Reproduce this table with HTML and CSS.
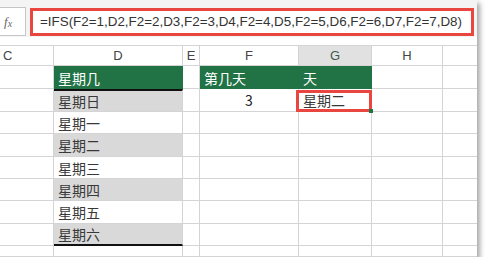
FILE: index.html
```html
<!DOCTYPE html>
<html lang="zh-CN">
<head>
    <meta charset="UTF-8">
    <meta name="viewport" content="width=device-width, initial-scale=1.0">
    <title>IFS 星期</title>
    <link rel="stylesheet" href="styles.css">
</head>
<body>

    <div class="window">
        <div class="formula-bar">
            <div class="fx-box"><span class="fx">f<span class="fx-x">x</span></span></div>
            <div class="formula">=IFS(F2=1,D2,F2=2,D3,F2=3,D4,F2=4,D5,F2=5,D6,F2=6,D7,F2=7,D8)</div>
        </div>

        <div class="sheet">
            <!-- column headers -->
            <div class="hd hd-c">C</div>
            <div class="hd">D</div>
            <div class="hd">E</div>
            <div class="hd">F</div>
            <div class="hd selected">G</div>
            <div class="hd">H</div>
            <div class="hd"></div>

            <!-- row 1 -->
            <div class="cell"></div>
            <div class="cell green">星期几</div>
            <div class="cell"></div>
            <div class="cell green">第几天</div>
            <div class="cell green">天</div>
            <div class="cell"></div>
            <div class="cell"></div>

            <!-- row 2 -->
            <div class="cell"></div>
            <div class="cell band first">星期日</div>
            <div class="cell"></div>
            <div class="cell num">3</div>
            <div class="cell active">星期二<span class="mark"></span><span class="handle"></span></div>
            <div class="cell"></div>
            <div class="cell"></div>

            <!-- row 3 -->
            <div class="cell"></div>
            <div class="cell">星期一</div>
            <div class="cell"></div>
            <div class="cell"></div>
            <div class="cell"></div>
            <div class="cell"></div>
            <div class="cell"></div>

            <!-- row 4 -->
            <div class="cell"></div>
            <div class="cell band">星期二</div>
            <div class="cell"></div>
            <div class="cell"></div>
            <div class="cell"></div>
            <div class="cell"></div>
            <div class="cell"></div>

            <!-- row 5 -->
            <div class="cell"></div>
            <div class="cell">星期三</div>
            <div class="cell"></div>
            <div class="cell"></div>
            <div class="cell"></div>
            <div class="cell"></div>
            <div class="cell"></div>

            <!-- row 6 -->
            <div class="cell"></div>
            <div class="cell band">星期四</div>
            <div class="cell"></div>
            <div class="cell"></div>
            <div class="cell"></div>
            <div class="cell"></div>
            <div class="cell"></div>

            <!-- row 7 -->
            <div class="cell"></div>
            <div class="cell">星期五</div>
            <div class="cell"></div>
            <div class="cell"></div>
            <div class="cell"></div>
            <div class="cell"></div>
            <div class="cell"></div>

            <!-- row 8 -->
            <div class="cell"></div>
            <div class="cell band last">星期六</div>
            <div class="cell"></div>
            <div class="cell"></div>
            <div class="cell"></div>
            <div class="cell"></div>
            <div class="cell"></div>

            <!-- row 9 (cut off) -->
            <div class="cell"></div>
            <div class="cell"></div>
            <div class="cell"></div>
            <div class="cell"></div>
            <div class="cell"></div>
            <div class="cell"></div>
            <div class="cell"></div>
        </div>
    </div>

</body>
</html>
```

FILE: styles.css
```css
body {
    margin: 0;
    background: #fff;
    font-family: "Liberation Sans", "Noto Sans CJK SC", sans-serif;
}

.window {
    width: 477px;
    height: 257px;
    background: #fff;
    box-shadow: 3px 3px 5px rgba(0, 0, 0, 0.35);
    overflow: hidden;
}

/* formula bar */
.formula-bar {
    height: 37px;
    background: #f4f4f4;
    display: flex;
    align-items: flex-start;
    gap: 4px;
    padding-top: 7px;
    box-sizing: border-box;
}

.fx-box {
    width: 26px;
    height: 29px;
    box-sizing: border-box;
    background: #fff;
    border: 1px solid #c6c6c6;
    border-left: none;
    display: flex;
    align-items: center;
    padding-left: 4px;
}

.fx {
    font-family: "Liberation Serif", serif;
    font-style: italic;
    font-size: 13px;
    color: #666;
}

.fx-x {
    font-size: 10px;
    position: relative;
    top: 1px;
}

.formula {
    width: 444px;
    height: 28px;
    margin-top: 1px;
    box-sizing: border-box;
    border: 3px solid #e8463f;
    background: #fff;
    padding-left: 7px;
    font-size: 13.4px;
    line-height: 22px;
    color: #333;
    white-space: nowrap;
}

/* grid */
.sheet {
    margin-top: 8px;
    display: grid;
    grid-template-columns: 54px 129px 17px 99px 73px 71px 34px;
    grid-template-rows: 21px 23px 23px 22px 23px 22px 22px 23px 22px 11px;
    font-family: "Noto Sans CJK SC", sans-serif;
    font-size: 14px;
    color: #383838;
}

.sheet > div {
    box-sizing: border-box;
    border-right: 1px solid #d4d4d4;
    border-bottom: 1px solid #d4d4d4;
    display: flex;
    align-items: center;
    padding-left: 4px;
    white-space: nowrap;
}

.sheet > div:nth-child(7n) {
    border-right: none;
}

.hd {
    border-top: 1px solid #d4d4d4;
    justify-content: center;
    padding-left: 0 !important;
    font-family: "Liberation Sans", sans-serif;
    font-size: 13px;
    color: #444;
}

.hd-c {
    justify-content: flex-start;
    padding-left: 3px !important;
}

.hd.selected {
    background: #e1e1e1;
    color: #3d5a4a;
}

.green {
    background: #217346;
    border-color: #217346 !important;
    color: #fff;
    padding-top: 2px;
}

.band {
    background: #d9d9d9;
}

.first {
    border-top: 2px solid #111;
}

.last {
    border-bottom: 2px solid #111 !important;
}

.num {
    justify-content: center;
    padding-left: 0 !important;
    color: #222;
}

.active {
    position: relative;
}

/* selection outline around the result cell */
.mark {
    position: absolute;
    left: -3px;
    top: 1px;
    right: -1px;
    bottom: -1px;
    border: 3px solid #e8463f;
}

.handle {
    position: absolute;
    right: -2px;
    bottom: -2px;
    width: 4px;
    height: 4px;
    background: #217346;
}
```
